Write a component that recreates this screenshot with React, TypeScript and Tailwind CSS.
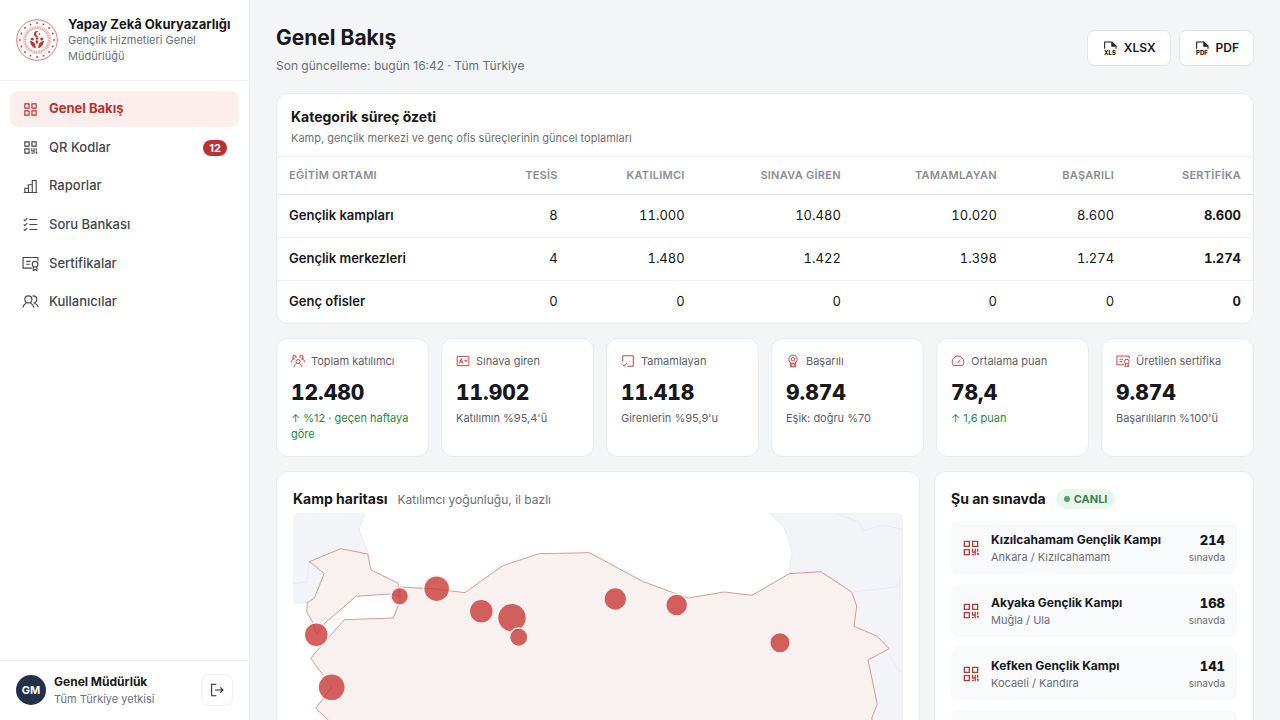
import type { ReactNode } from "react";

type IconName =
  | "dashboard" | "qr" | "chart" | "checklist" | "certificate" | "users"
  | "team" | "grade" | "task" | "medal" | "gauge" | "logout";

const ICONS: Record<IconName, ReactNode> = {
  dashboard: <path d="M4 4h6v6H4zM14 4h6v6h-6zM4 14h6v6H4zM14 14h6v6h-6z" />,
  qr: <path d="M4 4h6v6H4zM14 4h6v6h-6zM4 14h6v6H4zM13.800 13v4H17M17 13v7.700M13.200 20h2.200M20 13v3.500M19 18.500h1.500v2.200" />,
  chart: <path d="M2.500 20.500h19M4 20.500v-6h5v6M9 20.500V9.500h5.500v11M14.500 20.500v-17H20v17" />,
  checklist: <path d="M10.500 5H21.500M10.500 12H21.500M10.500 19H21.500M2.500 5l1.500 1.500L7.500 3M2.500 12l1.500 1.500L7.500 10M2.500 19l1.500 1.500L7.500 17" />,
  certificate: <path d="M14 18.500H1.500v-15h21V8M6 9h6M6 13h5M18.500 9a4 4 0 1 1 0 8 4 4 0 0 1 0-8zM16 16.500V22l2.500-1.500L21 22v-5.500" />,
  users: <path d="M9 4a5 5 0 1 1 0 10A5 5 0 0 1 9 4zM1 20.500c1-3.500 3-5.500 5-6.500M17 20.500c-1-3.500-3-5.500-5-6.500M15 4c4 0 6 2.500 6 5s-1.500 4-3.500 5c3 1 4.500 3 5.500 6" />,
  team: <path d="M12 9.500a3.500 3.500 0 1 1 0 7 3.500 3.500 0 0 1 0-7zM5.500 22c.5-3 2-5 4-6M18.500 22c-.5-3-2-5-4-6M8.500 7V3H3.500v5.500h3.500M1 14c0-3 1-5 3.500-5.500M15.500 7V3h5v5.500H17M23 14c0-3-1-5-3.500-5.500" />,
  grade: <path d="M2 4h20v16H2zM6 16l3-8 3 8M7 13.500h4M14.500 11.500h4.500M16.750 9.250v4.500" />,
  task: <path d="M3 13V3h18v18H11M3 18l2.500 3L10 15.500" />,
  medal: <path d="M12 2a7 7 0 1 1 0 14 7 7 0 0 1 0-14zM12 6a3 3 0 1 1 0 6 3 3 0 0 1 0-6zM7.500 14.500V22h9v-7.500M10 16v6M14 16v6" />,
  gauge: <path d="M4 19.500a10 10 0 1 1 16 0zM11 16l5-6.500M7 14h.5M12 8v.5" />,
  logout: <path d="M11 3.500H4v17h7M9 12h12M17 8l4 4-4 4" />,
};

function Icon({ name, className }: { name: IconName; className: string }) {
  return (
    <svg viewBox="0 0 24 24" fill="none" stroke="currentColor" strokeWidth="1.6" className={className} aria-hidden="true">
      {ICONS[name]}
    </svg>
  );
}

function FileIcon({ label }: { label: string }) {
  return (
    <svg viewBox="0 0 24 24" className="size-4 shrink-0" aria-hidden="true">
      <path d="M4 13V3h11l6 6v4" fill="none" stroke="currentColor" strokeWidth="1.6" />
      <path d="M14 3v7H21z" fill="currentColor" />
      <text x="12" y="22.500" textAnchor="middle" fontSize="9" fontWeight="800" fill="currentColor">{label}</text>
    </svg>
  );
}

const RING = Array.from({ length: 16 }, (_, i) => (i * Math.PI) / 8);

function Emblem() {
  return (
    <svg viewBox="0 0 42 42" className="size-[42px] shrink-0" aria-hidden="true">
      <circle cx="21" cy="21" r="20.300" fill="#fff" stroke="#c98480" strokeWidth="1" />
      <circle cx="21" cy="21" r="12" fill="none" stroke="#e2aba7" strokeWidth="2.400" strokeDasharray="1.200 0.500" />
      <circle cx="21" cy="21" r="14" fill="none" stroke="#dda5a1" strokeWidth="0.500" />
      {RING.map((a) => (
        <circle key={a} cx={21 + 17 * Math.cos(a)} cy={21 + 17 * Math.sin(a)} r="0.900" fill="#b9433c" />
      ))}
      <path d="M22.500 12.700a3 3 0 1 0 0 4.800 2.400 2.400 0 1 1 0-4.800z" fill="#bd3a33" />
      <circle cx="23.500" cy="15.100" r="0.900" fill="#bd3a33" />
      <circle cx="16.200" cy="20" r="1.600" fill="#bd3a33" />
      <circle cx="25.800" cy="20" r="1.600" fill="#bd3a33" />
      <circle cx="21" cy="19.500" r="1.300" fill="#bd3a33" />
      <path d="M14 21.800c2.500.3 4 1.500 5 3l1 4.500c-3.500-.5-5.500-3.500-6-7.500zM28 21.800c-2.500.3-4 1.500-5 3l-1 4.500c3.500-.5 5.500-3.500 6-7.500zM19.300 21.500h3.400L21 26z" fill="#bd3a33" />
    </svg>
  );
}

const NAV: { icon: IconName; label: string; badge?: string; active?: boolean }[] = [
  { icon: "dashboard", label: "Genel Bakış", active: true },
  { icon: "qr", label: "QR Kodlar", badge: "12" },
  { icon: "chart", label: "Raporlar" },
  { icon: "checklist", label: "Soru Bankası" },
  { icon: "certificate", label: "Sertifikalar" },
  { icon: "users", label: "Kullanıcılar" },
];

function Sidebar() {
  return (
    <aside className="flex h-full w-[250px] shrink-0 flex-col border-r border-[#e9edf0] bg-white">
      <div className="flex items-center gap-2.5 border-b border-[#eef1f3] py-4 pr-2 pl-4">
        <Emblem />
        <div>
          <div className="text-[13px] leading-4 font-bold whitespace-nowrap text-[#17181c]">Yapay Zekâ Okuryazarlığı</div>
          <div className="max-w-[150px] text-[11px] leading-4 text-[#6b6f76]">Gençlik Hizmetleri Genel Müdürlüğü</div>
        </div>
      </div>
      <nav className="flex-1 p-2.5">
        <ul className="flex h-[229px] flex-col justify-between">
          {NAV.map((item) => (
            <li key={item.label}>
              <a
                href="#"
                aria-current={item.active ? "page" : undefined}
                className={
                  item.active
                    ? "flex h-9 items-center gap-2.5 rounded-lg bg-[#fbeeed] px-3 text-[13px] font-bold text-[#b8322f]"
                    : "flex h-9 items-center gap-2.5 rounded-lg px-3 text-[13px] font-medium text-[#44474d]"
                }
              >
                <Icon name={item.icon} className="size-[17px] shrink-0" />
                <span className="flex-1">{item.label}</span>
                {item.badge && (
                  <span className="rounded-full bg-[#b8322f] px-1.5 text-[11px] leading-4 font-bold text-white">{item.badge}</span>
                )}
              </a>
            </li>
          ))}
        </ul>
      </nav>
      <div className="flex items-center gap-2 border-t border-[#e9edf0] px-4 pt-3 pb-[13px]">
        <div className="flex size-[30px] items-center justify-center rounded-full bg-[#22304a] text-[11px] font-bold text-white">GM</div>
        <div className="flex-1">
          <div className="text-[12px] leading-[18px] font-bold text-[#17181c]">Genel Müdürlük</div>
          <div className="text-[11px] leading-4 text-[#6b6f76]">Tüm Türkiye yetkisi</div>
        </div>
        <button type="button" aria-label="Çıkış yap" className="flex size-8 items-center justify-center rounded-lg border border-[#eef0f2] bg-white text-[#26282c]">
          <Icon name="logout" className="size-4" />
        </button>
      </div>
    </aside>
  );
}

const CARD = "rounded-xl border border-[#e8ecef] bg-white";

const HEADERS = ["TESİS", "KATILIMCI", "SINAVA GİREN", "TAMAMLAYAN", "BAŞARILI", "SERTİFİKA"];
const ROWS = [
  { name: "Gençlik kampları", values: ["8", "11.000", "10.480", "10.020", "8.600", "8.600"] },
  { name: "Gençlik merkezleri", values: ["4", "1.480", "1.422", "1.398", "1.274", "1.274"] },
  { name: "Genç ofisler", values: ["0", "0", "0", "0", "0", "0"] },
];

function Summary() {
  return (
    <section className={`${CARD} shrink-0 overflow-hidden`}>
      <div className="border-b border-[#eef0f2] px-3.5 pt-[13px] pb-[7px]">
        <h2 className="text-[14px] leading-5 font-bold text-[#17181c]">Kategorik süreç özeti</h2>
        <p className="text-[11px] leading-[22px] text-[#6b6f76]">Kamp, gençlik merkezi ve genç ofis süreçlerinin güncel toplamları</p>
      </div>
      <table className="w-full table-fixed">
        <colgroup>
          <col className="w-[22%]" />
          <col className="w-[8%]" />
          <col className="w-[13%]" />
          <col className="w-[16%]" />
          <col className="w-[16%]" />
          <col className="w-[12%]" />
          <col className="w-[13%]" />
        </colgroup>
        <thead>
          <tr className="h-[37px] border-b border-[#dfe3e6] text-[11px] font-semibold tracking-wide text-[#8a8d92]">
            <th scope="col" className="px-3 text-left font-semibold">EĞİTİM ORTAMI</th>
            {HEADERS.map((h) => (
              <th key={h} scope="col" className="px-3 text-right font-semibold whitespace-nowrap">{h}</th>
            ))}
          </tr>
        </thead>
        <tbody>
          {ROWS.map((row) => (
            <tr key={row.name} className="h-[43px] border-b border-[#eef0f2] text-[13px] text-[#17181c] last:border-b-0">
              <th scope="row" className="px-3 text-left font-semibold">{row.name}</th>
              {row.values.map((v, i) => (
                <td key={i} className="px-3 text-right tabular-nums last:font-bold">{v}</td>
              ))}
            </tr>
          ))}
        </tbody>
      </table>
    </section>
  );
}

const KPIS: { icon: IconName; label: string; value: string; note: string; up?: boolean }[] = [
  { icon: "team", label: "Toplam katılımcı", value: "12.480", note: "↑ %12 · geçen haftaya göre", up: true },
  { icon: "grade", label: "Sınava giren", value: "11.902", note: "Katılımın %95,4'ü" },
  { icon: "task", label: "Tamamlayan", value: "11.418", note: "Girenlerin %95,9'u" },
  { icon: "medal", label: "Başarılı", value: "9.874", note: "Eşik: doğru %70" },
  { icon: "gauge", label: "Ortalama puan", value: "78,4", note: "↑ 1,6 puan", up: true },
  { icon: "certificate", label: "Üretilen sertifika", value: "9.874", note: "Başarılıların %100'ü" },
];

function Kpis() {
  return (
    <section className="grid shrink-0 grid-cols-6 gap-3">
      {KPIS.map((k) => (
        <div key={k.label} className={`${CARD} px-3.5 pt-3 pb-3.5`}>
          <div className="flex items-center gap-1.5 text-[11px] leading-5 whitespace-nowrap text-[#5d6168]">
            <Icon name={k.icon} className="size-3.5 shrink-0 text-[#c03a36]" />
            {k.label}
          </div>
          <div className="mt-2 text-[21px] leading-7 font-extrabold text-[#17181c] tabular-nums">{k.value}</div>
          <div className={k.up ? "mt-[3px] text-[11px] leading-4 text-[#2f8443]" : "mt-[3px] text-[11px] leading-4 text-[#5d6168]"}>{k.note}</div>
        </div>
      ))}
    </section>
  );
}

const CAMPS = [
  { x: 106.7, y: 83.3, r: 8.8 },
  { x: 143.7, y: 75.7, r: 13 },
  { x: 188.3, y: 98.3, r: 12 },
  { x: 219, y: 104.7, r: 14.5 },
  { x: 225.7, y: 124.3, r: 9.2 },
  { x: 23.3, y: 121.7, r: 12 },
  { x: 38.7, y: 174.3, r: 13.6 },
  { x: 322.3, y: 86, r: 11.4 },
  { x: 383.7, y: 92, r: 11 },
  { x: 487, y: 129.7, r: 10.3 },
];

function CampMap() {
  return (
    <section className={`${CARD} p-4`}>
      <div className="flex items-baseline gap-2.5">
        <h2 className="text-[14px] leading-[22px] font-bold text-[#17181c]">Kamp haritası</h2>
        <span className="text-[12px] text-[#6b6f76]">Katılımcı yoğunluğu, il bazlı</span>
      </div>
      <svg viewBox="0 0 610 300" className="mt-[3px] w-full rounded-md" role="img" aria-label="Kamp haritası">
        <g fill="#f2f4f8" stroke="#e7eaf0" strokeWidth="1">
          <path d="M-2-2H72L66 17 76 42 14 90H-2z" />
          <path d="M474-2 491 14 496 27 499 40 496 62 530 302H612V-2z" />
          <path d="M542 0 566 9 570 18 590 12 612 17M560 79 602 74 607 70M607 64V88M596 140 604 156 612 160M-2 71 14 69 16 49" fill="none" />
        </g>
        <path
          d="M16.300 48.700 47.700 35.700 74.700 41 78 57 105 70 106 83 96.300 81 63 83.300 32 110 23.300 121.700 19.300 108.700 13.700 98.700 14.300 89.700 21.300 85.300 31.300 60.300zM106.700 74 143.700 76 172 79.700 209.700 52.700 246.300 40.700 296.300 39.700 350.300 68.700 380.300 79.700 395.300 85 431.300 79 459 82.300 496.300 60.700 528 58.700 558.700 79 563.700 93 561 113.300 583.700 123 596.300 135.700 575 147 584.300 191.300 578.700 205.300 590 240 560 262 480 270 400 275 330 290 250 280 170 290 90 270 50 240 35.300 207 22.700 195.300 38.700 174 17.700 145.300 36.300 123.700 51.300 106.700 100.300 105 107 88z"
          fill="#f9f1ef"
          stroke="#d99a97"
          strokeWidth="1"
          strokeLinejoin="round"
        />
        {CAMPS.map((c) => (
          <circle key={`${c.x}-${c.y}`} cx={c.x} cy={c.y} r={c.r} fill="#c93e3b" fillOpacity="0.820" stroke="#fdf6f5" strokeWidth="1.500" />
        ))}
      </svg>
    </section>
  );
}

const LIVE = [
  { name: "Kızılcahamam Gençlik Kampı", place: "Ankara / Kızılcahamam", count: "214" },
  { name: "Akyaka Gençlik Kampı", place: "Muğla / Ula", count: "168" },
  { name: "Kefken Gençlik Kampı", place: "Kocaeli / Kandıra", count: "141" },
];

function LiveExams() {
  return (
    <section className={`${CARD} p-4`}>
      <div className="flex items-center gap-2.5">
        <h2 className="text-[14px] leading-[22px] font-bold text-[#17181c]">Şu an sınavda</h2>
        <span className="flex items-center gap-1 rounded-full bg-[#e9f6ec] px-2 text-[11px] leading-5 font-bold text-[#3d8250]">
          <span className="size-1.5 rounded-full bg-[#5b9d70]" />
          CANLI
        </span>
      </div>
      <ul className="mt-[11px] flex flex-col gap-2.5">
        {LIVE.map((l) => (
          <li key={l.name} className="flex h-[53px] items-center gap-2.5 rounded-lg bg-[#f8fafb] pr-3 pl-2.5">
            <Icon name="qr" className="size-5 shrink-0 text-[#c03a36]" />
            <div className="min-w-0 flex-1">
              <div className="text-[12px] leading-[18px] font-bold whitespace-nowrap text-[#17181c]">{l.name}</div>
              <div className="text-[11px] leading-4 text-[#6b6f76]">{l.place}</div>
            </div>
            <div className="text-right">
              <div className="text-[13px] leading-[18px] font-extrabold text-[#17181c] tabular-nums">{l.count}</div>
              <div className="text-[10px] leading-4 text-[#6b6f76]">sınavda</div>
            </div>
          </li>
        ))}
        <li className="h-[53px] rounded-lg bg-[#f8fafb]" />
      </ul>
    </section>
  );
}

export default function App() {
  return (
    <div className="flex h-screen overflow-hidden bg-[#f3f5f7] font-['Inter','Noto_Sans',sans-serif]">
      <Sidebar />
      <main className="flex min-w-0 flex-1 flex-col gap-3.5 overflow-y-auto px-[26px] pt-6 pb-6 [scrollbar-width:none]">
        <header className="mb-[3px] flex shrink-0 items-start justify-between">
          <div>
            <h1 className="text-[21px] leading-7 font-bold text-[#17181c]">Genel Bakış</h1>
            <p className="mt-1 text-[12px] leading-5 text-[#6b6f76]">Son güncelleme: bugün 16:42 · Tüm Türkiye</p>
          </div>
          <div className="mt-1.5 flex gap-2">
            {["XLSX", "PDF"].map((t) => (
              <button key={t} type="button" className="flex h-9 items-center gap-1.5 rounded-lg border border-[#e3e7ea] bg-white px-3.5 text-[12px] font-semibold text-[#17181c]">
                <FileIcon label={t.slice(0, 3)} />
                {t}
              </button>
            ))}
          </div>
        </header>
        <Summary />
        <Kpis />
        <div className="grid shrink-0 grid-cols-[minmax(0,1fr)_320px] items-start gap-3.5">
          <CampMap />
          <LiveExams />
        </div>
      </main>
    </div>
  );
}
